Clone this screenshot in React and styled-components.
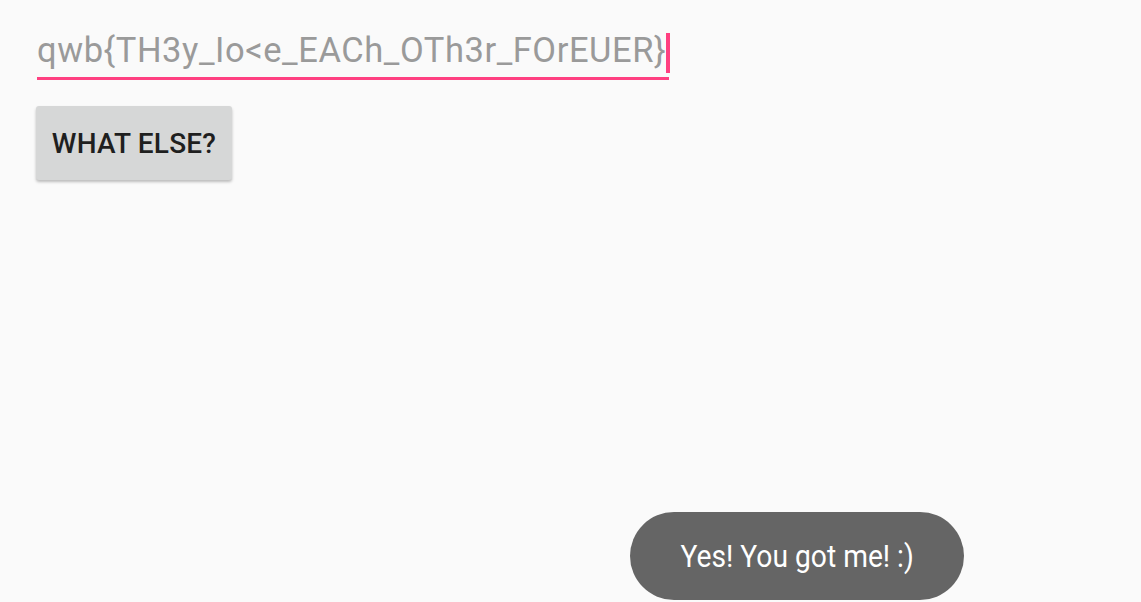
import styled, { createGlobalStyle } from 'styled-components';

const GlobalStyle = createGlobalStyle`
	html, body {
		margin: 0;
		padding: 0;
		background: #fafafa;
	}
	#root {
		min-height: 602px;
	}
`

const Screen = styled.div`
	position: relative;
	height: 602px;
	overflow: hidden;
	background: #fafafa;
	font-family: Roboto, "Noto Sans", sans-serif;
	display: flex;
	flex-direction: column;
	align-items: flex-start;
	padding: 24px 0 0 37px;
	box-sizing: border-box;
`

const Field = styled.div`
	width: 632px;
	height: 53px;
	border-bottom: 3px solid #ff4081;
	display: flex;
	align-items: flex-end;
	box-sizing: content-box;
`

const FieldText = styled.span`
	flex-shrink: 0;
	font-size: 34.5px;
	line-height: 40px;
	letter-spacing: 0.55px;
	color: #9a9a9a;
	white-space: nowrap;
	margin-bottom: 7px;
`

const Cursor = styled.span`
	flex-shrink: 0;
	width: 4px;
	height: 40px;
	background: #ff4081;
	margin-bottom: 4px;
`

const Button = styled.button`
	margin: 26px 0 0 -1px;
	width: 196px;
	height: 74px;
	border: none;
	border-radius: 3px;
	background: #d6d7d7;
	box-shadow: 0 2px 3px rgba(0, 0, 0, 0.25);
	font-family: Roboto, sans-serif;
	font-weight: 500;
	font-size: 28px;
	letter-spacing: 0.2px;
	color: #1f1f1f;
	text-transform: uppercase;
	padding: 0;
`

const Toast = styled.div`
	position: absolute;
	left: 630px;
	top: 512px;
	width: 334px;
	height: 88px;
	border-radius: 44px;
	background: #656565;
	display: flex;
	align-items: center;
	justify-content: center;
	color: #fff;
`

const ToastText = styled.span`
	font-size: 30.5px;
	transform: scaleX(0.925);
	white-space: nowrap;
`

export default function App() {
	return (
		<>
			<GlobalStyle />
			<Screen>
				<Field>
					<FieldText>qwb{'{'}TH3y_Io&lt;e_EACh_OTh3r_FOrEUER{'}'}</FieldText>
					<Cursor />
				</Field>
				<Button>What else?</Button>
				<Toast>
					<ToastText>Yes! You got me! :)</ToastText>
				</Toast>
			</Screen>
		</>
	)
}
